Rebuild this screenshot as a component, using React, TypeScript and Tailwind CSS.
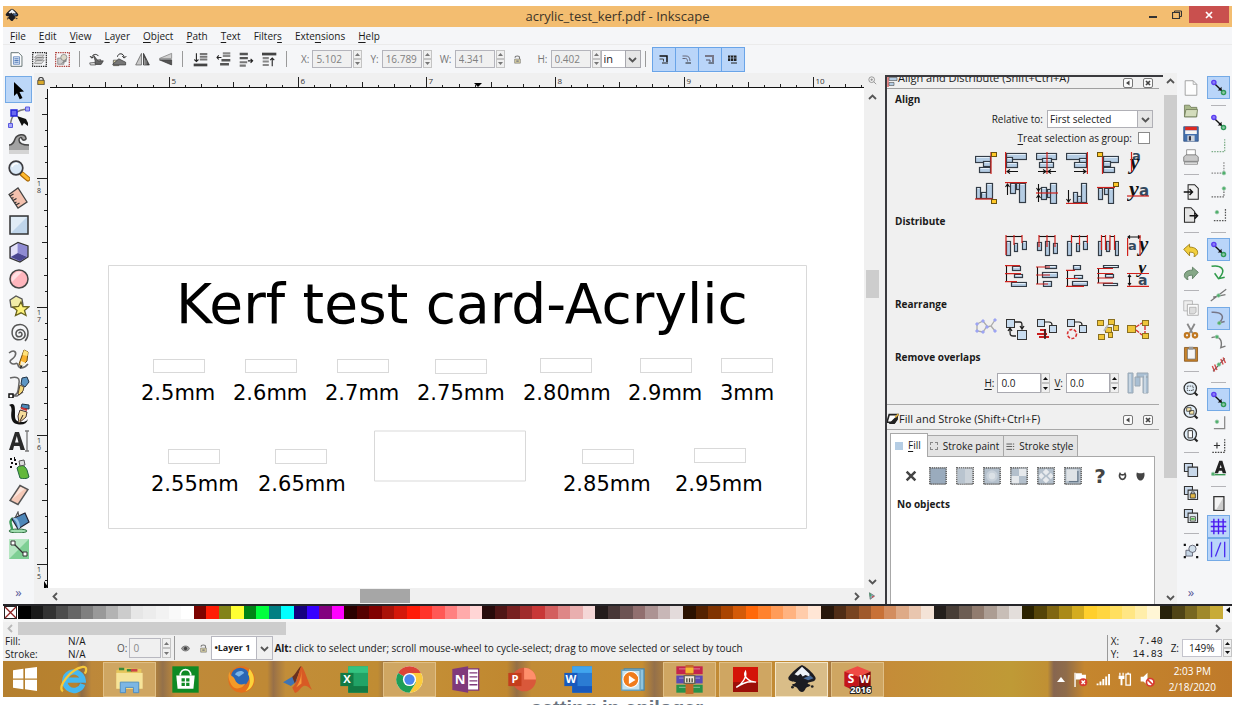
import React from "react";

type Kids = { children?: React.ReactNode };

function Ico({ s = 22, children }: { s?: number } & Kids) {
  return (
    <svg width={s} height={s} viewBox="0 0 22 22" fill="none" aria-hidden="true" className="block shrink-0">
      {children}
    </svg>
  );
}

/* ---------- shared widgets ---------- */

function Arrows({ dark = false, tall = false }: { dark?: boolean; tall?: boolean }) {
  const c = dark ? "#111" : "#777";
  return (
    <span className={tall ? "flex h-5 w-[9px] flex-col" : "flex h-[18px] w-[9px] flex-col"}>
      {["up", "down"].map((d) => (
        <button key={d} type="button" aria-label={d} className="flex flex-1 items-center justify-center border border-[#c4c4c4] bg-[#f0f0f0]">
          <svg width="5" height="3" viewBox="0 0 5 3" aria-hidden="true">
            <path d={d === "up" ? "M0 3L2.5 0 5 3z" : "M0 0L2.5 3 5 0z"} fill={c} />
          </svg>
        </button>
      ))}
    </span>
  );
}

function Num({ label, value }: { label: string; value: string }) {
  return (
    <span className="flex items-center gap-px">
      <label className="flex items-center gap-[3px] text-[#777]">
        {label}
        <input defaultValue={value} className="h-[18px] w-10 border border-[#b4b4bb] bg-[#f0f0f0] px-[3px] text-[#808080] outline-none" />
      </label>
      <Arrows />
    </span>
  );
}

function Chev({ dir, pale = false }: { dir: "up" | "down" | "left" | "right"; pale?: boolean }) {
  const d = { up: "M1 6l3.500-3.500L8 6", down: "M1 3l3.500 3.500L8 3", left: "M6 1L2.500 4.500 6 8", right: "M3 1l3.500 3.500L3 8" }[dir];
  return (
    <svg width="9" height="9" viewBox="0 0 9 9" fill="none" aria-hidden="true" className="block shrink-0">
      <path d={d} stroke={pale ? "#b8b8b8" : "#555"} strokeWidth="1.8" />
    </svg>
  );
}

function U({ t }: { t: string }) {
  const [a, b, c] = t.split("_");
  return (
    <span>
      {a}
      <span className="underline decoration-1 underline-offset-2 [text-decoration-skip-ink:none]">{b}</span>
      {c}
    </span>
  );
}

/* ---------- top ---------- */

const menus = ["_F_ile", "_E_dit", "_V_iew", "_L_ayer", "_O_bject", "_P_ath", "_T_ext", "Filter_s_", "Exte_n_sions", "_H_elp"];

function InkMark({ s }: { s: number }) {
  return (
    <Ico s={s}>
      <path d="M11 1C9 1 1 8.500 1 10.500S4 13 6 13.200c1.500.2 0 1.300-1.500 1.500s-.5 1.600 1.500 2c2 .3 2.500 3.800 5 3.800s2-3 4-3.600c1.800-.5 3-1.300 1.500-1.800s-2-1.400 0-1.700 4.500-.7 4.500-2.900S13 1 11 1z" fill="#1c1c22" />
      <path d="M11 2L5.500 7.500 8 8.600l2-1.500 1.500 2 2-1 3 1 0-2z" fill="#eef2f8" />
      <path d="M12 10.500l5-2 2.500 2-4 1.500z" fill="#4a6c9a" />
      <circle cx="4" cy="17" r="1" fill="#222" />
      <circle cx="18.500" cy="16.500" r="1" fill="#222" />
    </Ico>
  );
}

const topIcons: [string, React.ReactNode][] = [
  ["Select all", <><path d="M3 1h11l5 5v15H3z" fill="#fff" stroke="#566" strokeWidth="1.300" /><path d="M6.500 7h9v11h-9z" fill="#dce8f8" stroke="#4470b0" /><path d="M8 10h6M8 12.500h6M8 15h6" stroke="#3462a8" strokeWidth="1.200" /></>],
  ["Select layers", <><path d="M1 1h20v20H1z" stroke="#222" strokeWidth="1.700" strokeDasharray="2 1.300" /><path d="M4 15l4-3h10l-4 5H4zM4 11l4-3h10l-4 4H4zM4 7.500l4-3h10l-4 4H4z" fill="#d8d8d8" stroke="#666" strokeWidth=".8" /></>],
  ["Deselect", <><path d="M1 1h20v20H1z" stroke="#b0403a" strokeWidth="1.700" strokeDasharray="2 1.300" /><path d="M4 9h9v9H4z" fill="#cdcdcd" stroke="#777" /><circle cx="13" cy="8" r="4.500" fill="#dcd8c8" stroke="#777" /><path d="M8 18l9-9v5z" fill="#888" /></>],
];
const rotIcons: [string, React.ReactNode][] = [
  ["Rotate left", <><path d="M1 16l10-1-1 4H2zM11 12l6-1v7h-6z" fill="#ddd" stroke="#444" /><path d="M9 13L7 5l6 8h8l-3 5H9z" fill="#666" stroke="#333" /><path d="M4 8c1-5 7-6 10-2M1.500 6l2.500 3 3-2" stroke="#222" strokeWidth="1.400" /></>],
  ["Rotate right", <><path d="M2 12h8v8H2z" fill="#d8d2a8" stroke="#444" /><path d="M1 18l9-8 10 5v4H2z" fill="#777" stroke="#333" /><path d="M8 7c1-6 9-6 10 1M15 6l3 3 3-3" stroke="#222" strokeWidth="1.400" /></>],
  ["Flip horizontal", <><path d="M9.500 2v17H1z" fill="#c9c9c9" stroke="#555" /><path d="M12.500 2v17H21z" fill="#555" stroke="#222" /><path d="M14 9v10M16 12v7" stroke="#bbb" /></>],
  ["Flip vertical", <><path d="M20 2v7.500H2z" fill="#d0d0d0" stroke="#777" /><path d="M20 19v-7.500H2z" fill="#555" stroke="#333" /></>],
];
const zIcons: [string, React.ReactNode][] = [
  ["Lower to bottom", <><path d="M10 3h11M10 7h11M10 11h11" stroke="#777" strokeWidth="3" /><path d="M1 19h20" stroke="#444" strokeWidth="4" /><path d="M5 2v12M2 11l3 3 3-3" stroke="#222" strokeWidth="1.600" /></>],
  ["Lower", <><path d="M10 2h11M10 6h11" stroke="#888" strokeWidth="3" /><path d="M8 12h13M6 18h13" stroke="#555" strokeWidth="3.500" /><path d="M8 8H2M4 5L1.500 8 4 11" stroke="#222" strokeWidth="1.600" /></>],
  ["Raise", <><path d="M1 3h12M1 9h12" stroke="#555" strokeWidth="3.500" /><path d="M1 15h11M1 20h9" stroke="#777" strokeWidth="3" /><path d="M13 13h7M17 10l3 3-3 3" stroke="#222" strokeWidth="1.600" /></>],
  ["Raise to top", <><path d="M0 3h21" stroke="#444" strokeWidth="4" /><path d="M1 9h9M1 14h9M1 19h9" stroke="#888" strokeWidth="3" /><path d="M15 21V9M12 12l3-3 3 3" stroke="#222" strokeWidth="1.600" /></>],
];

const Sep = () => <span className="h-4 w-px bg-[#9a9a9a]" />;

function IconRow({ items, size = 15 }: { items: [string, React.ReactNode][]; size?: number }) {
  return (
    <div className="flex gap-2">
      {items.map(([n, g]) => (
        <button key={n} type="button" aria-label={n} className="flex">
          <Ico s={size}>{g}</Ico>
        </button>
      ))}
    </div>
  );
}

const scaleArt = [
  <><path d="M3 4h15v12" stroke="#111" strokeWidth="3" /><path d="M3 10h8v5" stroke="#444" strokeWidth="2" /><path d="M8 18h12" stroke="#222" strokeWidth="2" /></>,
  <><path d="M3 4h7c5 0 8 3 8 10" stroke="#667" strokeWidth="2" /><path d="M3 9h6c3 0 4 2 4 6" stroke="#667" strokeWidth="2" /><path d="M9 18h11" stroke="#222" strokeWidth="2" /></>,
  <><path d="M2 4h16v12" stroke="#778" strokeWidth="4" /><path d="M4 12h8v4" stroke="#556" strokeWidth="2" /><path d="M9 18h11" stroke="#222" strokeWidth="2" /></>,
  <><path d="M2 3h17v11H2z" fill="#222" /><path d="M2 8h17M7 3v11M13 3v11" stroke="#b8d4f8" strokeWidth="1.300" /><path d="M8 18h12" stroke="#222" strokeWidth="2" /></>,
];

const Lock = ({ s }: { s: number }) => (
  <Ico s={s}>
    <path d="M5 7c0-6 11-6 11 0v3" stroke="#777" strokeWidth="2.500" />
    <path d="M4 10h14v10H4z" fill="#d8cfa0" stroke="#777" strokeWidth="1.500" />
    <path d="M8 13h6v4H8z" fill="#888" />
  </Ico>
);

function Top() {
  return (
    <>
      <header className="grid h-[21px] shrink-0 grid-cols-[1fr_auto_1fr] bg-[#f3bd70]">
        <span className="pl-[2px] pt-[2px]"><InkMark s={14} /></span>
        <h1 className="text-[13px] leading-[21px] text-[#3c3428]">acrylic_test_kerf.pdf - Inkscape</h1>
        <div className="flex items-start justify-end pr-[3px]">
          <button type="button" aria-label="Minimize" className="flex h-[17px] w-6 items-center justify-center"><span className="mt-[5px] h-[2px] w-2 bg-[#333]" /></button>
          <button type="button" aria-label="Restore" className="flex h-[17px] w-6 items-center justify-center">
            <svg width="10" height="9" viewBox="0 0 10 9" fill="none" aria-hidden="true"><path d="M2.500 2V1h7v5.500H8" stroke="#333" /><path d="M.5 2.500h7v6h-7z" stroke="#333" strokeWidth="1.200" /></svg>
          </button>
          <button type="button" aria-label="Close" className="flex h-[17px] w-10 items-center justify-center bg-[#c9504e]">
            <svg width="8" height="8" viewBox="0 0 8 8" aria-hidden="true"><path d="M1 1l6 6M7 1L1 7" stroke="#fff" strokeWidth="1.700" /></svg>
          </button>
        </div>
      </header>
      <nav className="flex h-[18px] shrink-0 items-center gap-[13px] border-b border-[#ebebeb] bg-[#f5f6f8] pl-[7px] pt-[2px] text-[#1a1a1a]">
        {menus.map((m) => (
          <a key={m} href="#menu"><U t={m} /></a>
        ))}
      </nav>
      <div className="flex h-7 shrink-0 items-center bg-[#f5f6f8] pl-[6px]">
        <IconRow items={topIcons} />
        <span className="w-[9px]" /><Sep /><span className="w-[9px]" />
        <IconRow items={rotIcons} />
        <span className="w-[9px]" /><Sep /><span className="w-[10px]" />
        <IconRow items={zIcons} />
        <span className="w-[9px]" /><Sep /><span className="w-[14px]" />
        <div className="flex items-center gap-2">
          <Num label="X:" value="5.102" />
          <Num label="Y:" value="16.789" />
          <Num label="W:" value="4.341" />
          <button type="button" aria-label="Lock ratio" className="mr-2 flex"><Lock s={9} /></button>
          <Num label="H:" value="0.402" />
        </div>
        <span className="flex">
          <select aria-label="Unit" className="h-[18px] w-6 appearance-none border border-r-0 border-[#b4b4bb] bg-white px-[2px] text-[11px] leading-[14px] text-[#222] outline-none"><option>in</option></select>
          <span className="flex h-[18px] w-4 items-center justify-center border border-[#a8a8ae] bg-[#e6e6e6]"><Chev dir="down" /></span>
        </span>
        <span className="w-1" /><Sep /><span className="w-[6px]" />
        <div className="flex">
          {scaleArt.map((g, i) => (
            <button key={i} type="button" aria-label={"Scale option " + (i + 1)} className="-mr-px flex h-[25px] w-6 items-center justify-center border border-[#69a4e8] bg-[#b9d5f9]">
              <Ico s={11}>{g}</Ico>
            </button>
          ))}
        </div>
      </div>
    </>
  );
}

/* ---------- toolbox ---------- */

const tools: [string, React.ReactNode][] = [
  ["Selector", <path d="M6 3l10 9.500-4.500.5 3 6-2.800 1.200-2.700-6L6 17z" fill="#000" />],
  ["Nodes", <><path d="M2.500 19C3 10 8 3.500 20 3" stroke="#777" strokeWidth="1.500" /><path d="M9 10l5 10 2-3 4 3 0-3-2-4z" fill="#111" /><path d="M3 4h6v6H3z" fill="#6a6af0" stroke="#2222d8" strokeWidth="1.400" /><path d="M17.500 1h4v4h-4zM.5 17.500h4v4h-4z" fill="#a8a8fa" stroke="#5a5ae0" /></>],
  ["Tweak", <><path d="M1 12c4 0 5-3 6-6 2-5 10-6 11-1 .5 2-3 3-4 1 0-2-3-2-3 1 0 4 4 5 10 5v9H1z" fill="#a2a2a2" /><path d="M1 12c4 0 5-3 6-6 2-5 10-6 11-1 .5 2-3 3-4 1 0-2-3-2-3 1 0 4 4 5 10 5" stroke="#444" strokeWidth="1.500" /><path d="M1 17h20v4H1z" fill="#d4d4d4" /></>],
  ["Zoom", <><path d="M14 14l6 5" stroke="#a86808" strokeWidth="5" strokeLinecap="round" /><path d="M14.500 14l5.500 4.800" stroke="#ffb92e" strokeWidth="3" strokeLinecap="round" /><circle cx="8" cy="8" r="6.800" fill="#d9e8f6" stroke="#3c3c40" strokeWidth="1.700" /><path d="M4 7c1-3 4-4 6-3" stroke="#fff" strokeWidth="1.500" /></>],
  ["Measure", <><path d="M1 7.500L10 1l9 14-9 6z" fill="#f3c1ae" stroke="#444" strokeWidth="1.300" /><path d="M2 9l3.500-2M3.500 11.500l2-1M5 13.500l3.500-2M6.500 16l2-1M8 18l3.500-2" stroke="#333" strokeWidth="1.200" /></>],
  ["Rectangle", <><path d="M2 2h18v18H2z" fill="#bfd5ea" stroke="#333" strokeWidth="1.500" /><path d="M3 3h16L3 19z" fill="#e0ecf6" /></>],
  ["3D box", <><path d="M2 6l8-4.500L20 5v11l-8 5L2 17z" fill="#9c98d8" stroke="#333" strokeWidth="1.300" /><path d="M3 16l7-4 9 4-7 4z" fill="#4a4690" /><path d="M10 2.500V12l9 3.500V5.500z" fill="#8f8bd2" /><path d="M3 6.500l6.500-4V12L3 15.500z" fill="#e2e0f8" /></>],
  ["Ellipse", <><circle cx="11" cy="11" r="9" fill="#ffb6bd" stroke="#444" strokeWidth="1.500" /><path d="M4 14A8 8 0 0114 4z" fill="#ffdfe2" /></>],
  ["Star", <><path d="M2 5l6-4 6 3 1 6-5 4-7-2z" fill="#f2eda8" stroke="#555" strokeWidth="1.300" /><path d="M13 7l2 4.500 6 .3-4.500 3.700 1.500 5-5-2.700-5.500 2.700 1.500-5L5 12l5.500-.5z" fill="#fdf27a" stroke="#6a6420" strokeWidth="1.300" /></>],
  ["Spiral", <path d="M11 11.500c0-2 3-1.500 3 .8 0 3-5.500 3.500-6 0C7.500 7.500 14 5.500 16.500 10c2.500 5.500-4 9.500-9 7C2.500 14 3 5 9 3c6-2 11 2 11 8 0 3-1 6-3 8" stroke="#555" strokeWidth="1.500" />],
  ["Pencil", <><path d="M1 4c5-4 8-1 6 3s-7 4-4 7 6-2 7 2 6 4 10-1" stroke="#666" strokeWidth="1.600" /><path d="M16 1l4 2-1 9-6 6-2-3z" fill="#f8b12c" stroke="#6a4a10" /><path d="M16 1l4 2-.5 4-5-1z" fill="#ffe27a" /><path d="M13 12l5 2-6 5z" fill="#f8f0d0" /><path d="M12.500 16l2 1-2.500 3z" fill="#111" /></>],
  ["Pen", <><path d="M2 2c7-2 10 0 9 5-1 7 0 12-7 13h5l6-4" stroke="#666" strokeWidth="1.500" /><path d="M1 18h4v4H1z" fill="#fff" stroke="#111" strokeWidth="1.500" /><path d="M14 2l5-1 2 5-4 5-4-3z" fill="#5d96c4" stroke="#234" /><path d="M12 9l4 2-1 4-4 4-1-1z" fill="#f4d878" stroke="#543" /></>],
  ["Calligraphy", <><path d="M1 2c6-3 6 2 6 7S6 19 14 19c4 0 5-2 6-3-1 4-4 6-9 5.500C2 21 3 12 3.500 8 3.800 5 3 3 1 2z" fill="#111" /><path d="M14 1l7 1v4l-8-1z" fill="#4d88b8" stroke="#234" /><path d="M13 5l6 2" stroke="#c33" strokeWidth="2" /><path d="M12 7l7 2-1 5-7 6-1-7z" fill="#f6dc9a" stroke="#433" /><path d="M12 18l3-6" stroke="#322" /></>],
  ["Spray", <><path d="M9 11c3-4 8-3 10 2l2 7c-2 2-6 2-9 1z" fill="#62b83c" stroke="#264" /><path d="M11 4l5-1 1 5-5 1z" fill="#ddd" stroke="#555" /><path d="M2 2h2M6 3h2M3 6h2M7 7h2M2 10h2M6 1h1" stroke="#111" strokeWidth="1.800" /></>],
  ["Eraser", <><path d="M12 1.500l8 4L10 20.500l-8-4z" fill="#f5c8b6" stroke="#555" strokeWidth="1.400" /><path d="M4 15.500L12.500 3l4 2z" fill="#fbe4da" /></>],
  ["Bucket", <><ellipse cx="10" cy="20" rx="9" ry="2" fill="#9fdcae" stroke="#2c6a3c" /><path d="M5 7C0 11 4 13 4 19" stroke="#3c9c58" strokeWidth="2.500" /><path d="M4 8l13-6 4 9-11 7z" fill="#4d86b8" stroke="#223" strokeWidth="1.200" /><path d="M4 8c3-1 6 5 6 10l2-1C12 11 9 6 6 7z" fill="#9cc4e4" /><path d="M7 7l3-6 1 5" stroke="#555" strokeWidth="1.200" /></>],
];

const Text0 = <><path d="M1 20L7 2h4l6 18h-4.500l-1-4H6l-1 4zM7 12.500h3.500L8.800 6z" fill="#2a2a2a" fillRule="evenodd" /><path d="M17 1h4M17 21h4M19 1v20" stroke="#777" strokeWidth="1.300" /></>;
const Conn = <><path d="M1 1h20v20H1z" fill="#7fcf94" /><path d="M1 1h20L1 21z" fill="#b5e6c1" /><path d="M6 6l9 9" stroke="#333" strokeWidth="1.300" /><path d="M3 3h4v4H3zM15 14h4v4h-4z" fill="#fff" stroke="#333" /></>;
const allTools: [string, React.ReactNode][] = [...tools.slice(0, 13), ["Text", Text0], ...tools.slice(13), ["Connector", Conn]];

function Toolbox() {
  return (
    <aside className="flex w-[31px] shrink-0 flex-col items-center bg-[#f5f6f8] pt-[3px]">
      {allTools.map(([n, g], i) => (
        <button key={n} type="button" aria-label={n} className={i === 0 ? "flex h-[27px] w-[27px] items-center justify-center border border-[#74aae6] bg-[#bcd7f8]" : "flex h-[27px] w-[27px] items-center justify-center"}>
          <Ico>{g}</Ico>
        </button>
      ))}
      <a href="#more" aria-label="More tools" className="mt-auto pb-1 text-[13px] leading-4 text-[#5a5a9a]">»</a>
    </aside>
  );
}

/* ---------- canvas ---------- */

const inch = 128.7;

function HRuler() {
  const ticks = Array.from({ length: 130 }, (_, i) => i - 7);
  return (
    <svg className="block h-full w-full" aria-hidden="true">
      {ticks.map((i) => {
        const x = Math.round(121 + (i * inch) / 8) + 0.5;
        const major = i % 8 === 0;
        const top = major ? 4 : i % 4 === 0 ? 9 : i % 2 === 0 ? 11 : 12;
        return (
          <g key={i}>
            <path d={`M${x} ${top}V14`} stroke="#222" />
            {major && <text x={x + 2} y="11" fontSize="8" fill="#333">{5 + i / 8}</text>}
          </g>
        );
      })}
      <path d="M2 14.500H4000" stroke="#111" />
      <path d="M426 10h8l-4 4z" fill="#000" />
    </svg>
  );
}

function VRuler() {
  const ticks = Array.from({ length: 70 }, (_, i) => i - 5);
  return (
    <svg className="block h-full w-full" aria-hidden="true">
      {ticks.map((i) => {
        const y = Math.round(90 + (i * inch) / 8) + 0.5;
        const major = i % 8 === 0;
        const left = major ? 3 : i % 4 === 0 ? 8 : i % 2 === 0 ? 10 : 11;
        const n = String(18 - i / 8);
        return (
          <g key={i}>
            <path d={`M${left} ${y}H13`} stroke="#222" />
            {major && n.length === 2 && (
              <g fontSize="7" fill="#333">
                <text x="3" y={y + 7}>{n[0]}</text>
                <text x="3" y={y + 14}>{n[1]}</text>
              </g>
            )}
          </g>
        );
      })}
      <path d="M13.500 1V4000" stroke="#111" />
      <path d="M10 493v8l4-2z" fill="#000" />
    </svg>
  );
}

/* x, y, width of the cut-out, then the text and its left edge and baseline */
const cuts: [number, number, number, string, number, number][] = [
  [105, 271, 51, "2.5mm", 93, 312], [197, 271, 51, "2.6mm", 185, 312], [289, 271, 51, "2.7mm", 277, 312],
  [387, 271, 51, "2.75mm", 369, 312], [492, 270, 51, "2.80mm", 475, 312], [592, 270, 51, "2.9mm", 580, 312],
  [673, 270, 51, "3mm", 672, 312], [120, 361, 51, "2.55mm", 103, 403], [227, 361, 51, "2.65mm", 210, 403],
  [534, 361, 51, "2.85mm", 515, 403], [646, 360, 51, "2.95mm", 627, 403],
];

function Canvas() {
  return (
    <main className="grid min-w-0 flex-1 grid-cols-[14px_1fr_16px] grid-rows-[15px_1fr_16px] bg-[#f0f0f0]">
      <span className="pl-[3px] pt-1"><Ico s={8}><path d="M5 10V6c0-6 12-6 12 0v4" stroke="#333" strokeWidth="3" /><path d="M2 9h18v12H2z" fill="#d8a828" stroke="#333" strokeWidth="2" /></Ico></span>
      <HRuler />
      <span className="flex items-center justify-center"><Ico s={9}><circle cx="9" cy="9" r="7" stroke="#888" strokeWidth="2" /><path d="M6 9h6M9 6v6M14 14l6 6" stroke="#888" strokeWidth="2" /></Ico></span>

      <VRuler />
      <svg className="block h-full w-full bg-white font-['DejaVu_Sans',sans-serif]" role="img" aria-label="Kerf test card drawing">
        <g stroke="#d9d9d9" fill="none">
          <path d="M60.500 177.500H758.500V440.500H60.500z" />
          <path d="M326.500 343h151v50h-151z" />
          {cuts.map(([x, y, w], i) => <rect key={i} x={x + 0.5} y={y + 0.5} width={w} height={i < 3 ? 13 : 14} />)}
        </g>
        <text x="128" y="235" fontSize="55">Kerf test card-Acrylic</text>
        <g fontSize="21">
          {cuts.map(([, , , t, x, y]) => <text key={t} x={x} y={y}>{t}</text>)}
        </g>
      </svg>
      <div className="flex flex-col items-center pt-[5px] pb-[2px]">
        <Chev dir="up" />
        <span className="basis-[34%]" />
        <span className="h-7 w-[13px] bg-[#cdcdcd]" />
        <span className="flex-1" />
        <Chev dir="down" />
      </div>

      <span />
      <div className="flex items-center px-[3px]">
        <Chev dir="left" />
        <span className="basis-[37%]" />
        <span className="h-[14px] w-[50px] bg-[#a6a6a6]" />
        <span className="flex-1" />
        <Chev dir="right" />
      </div>
      <span className="flex items-center justify-center"><Ico s={8}><path d="M4 2l14 9-12 9z" fill="#9ab" stroke="#566" strokeWidth="2" /><path d="M4 2l6 7-5 4z" fill="#4a6" /><path d="M11 11h7l-6 6z" fill="#c55" /></Ico></span>
    </main>
  );
}

/* ---------- dock ---------- */

type Art = { n: string; b?: number[][]; r?: string; k?: string; y?: number[]; t?: [string, number, number, number, boolean][] };

function AlignIcon({ a }: { a: Art }) {
  return (
    <button type="button" aria-label={a.n} className="flex">
      <Ico>
        {a.b?.map(([x, y, w, h], i) => (
          <g key={i}>
            <rect x={x + 0.5} y={y + 0.5} width={w} height={h} fill="#b5cde4" stroke="#333c46" strokeWidth="1.200" />
            <path d={`M${x + 1.5} ${y + 1.5}h${w - 2}`} stroke="#e4eef7" />
          </g>
        ))}
        {a.t?.map(([s, x, y, f, serif], i) => (
          <text key={i} x={x} y={y} fontSize={f} fontWeight="bold" fontStyle={serif ? "italic" : "normal"} fill={serif ? "#111" : "#34495e"} className={serif ? "font-['Liberation_Serif',serif]" : "font-['DejaVu_Sans',sans-serif]"}>{s}</text>
        ))}
        {a.k && <path d={a.k} stroke="#111" strokeWidth="1.100" />}
        {a.r && <path d={a.r} stroke="#d0211c" strokeWidth="1.200" />}
        {a.y && <rect x={a.y[0] + 0.5} y={a.y[1] + 0.5} width="5" height="4" fill="#ffc828" stroke="#6b5310" />}
      </Ico>
    </button>
  );
}

const rowA: Art[] = [
  { n: "Right edges to left anchor", b: [[0, 4, 15, 6], [8, 9, 7, 5], [4, 15, 11, 5]], r: "M16 0V22", y: [16, 0] },
  { n: "Left edges", b: [[1, 1, 20, 6], [1, 5, 6, 5], [1, 10, 11, 5]], r: "M.6 0V22", k: "M2 19.500H13M5 17.500l-3 2 3 2" },
  { n: "Centre vertical axis", b: [[0, 1, 20, 6], [6, 6, 9, 5], [3, 10, 14, 5]], r: "M11 0V22", k: "M2 19.500H20M7 17.500l3 2-3 2M15 17.500l-3 2 3 2" },
  { n: "Right edges", b: [[0, 1, 20, 6], [13, 6, 7, 5], [8, 10, 12, 5]], r: "M21.400 0V22", k: "M8 19.500H20M17 17.500l3 2-3 2" },
  { n: "Left edges to right anchor", b: [[6, 4, 15, 6], [6, 9, 7, 5], [6, 15, 11, 5]], r: "M5.500 0V22", y: [0, 0] },
  { n: "Baseline anchors vertically", t: [["a", 5, 8, 13, false], ["y", 3, 17, 21, true]], r: "M4.500 0V20" },
];
const rowB: Art[] = [
  { n: "Bottom edges to top anchor", b: [[1, 5, 4, 11], [6, 10, 5, 6], [11, 1, 6, 15]], r: "M0 17H18", y: [16, 17] },
  { n: "Top edges", b: [[5, 1, 5, 10], [11, 1, 5, 6], [14, 1, 6, 19]], r: "M0 .6H22", k: "M2.500 2V13M.5 5l2-3 2 3" },
  { n: "Centre horizontal axis", b: [[5, 5, 5, 12], [11, 7, 5, 8], [14, 1, 6, 20]], r: "M0 11H22", k: "M2.500 2V20M.5 6l2 3 2-3M.5 16l2-3 2 3" },
  { n: "Bottom edges", b: [[7, 10, 4, 10], [11, 14, 4, 6], [15, 1, 5, 19]], r: "M0 21.400H22", k: "M2.500 8V20M.5 17l2 3 2-3" },
  { n: "Top edges to bottom anchor", b: [[1, 6, 4, 11], [7, 6, 4, 6], [11, 6, 5, 15]], r: "M0 5.500H18", y: [16, 0] },
  { n: "Baseline anchors horizontally", t: [["y", 2, 14, 22, true], ["a", 12, 14, 15, false]], r: "M0 14H22" },
];
const rowC: Art[] = [
  { n: "Distribute left edges", b: [[1, 6, 4, 14], [9, 8, 3, 8], [17, 6, 4, 8]], r: "M1 0V20M9 0V10M17 0V8", k: "M1 1.500H17" },
  { n: "Distribute centres", b: [[1, 7, 4, 8], [9, 6, 4, 14], [17, 8, 4, 10]], r: "M3 0V12M11 0V12M19 0V12", k: "M3 1.500H19" },
  { n: "Distribute right edges", b: [[1, 6, 4, 14], [10, 8, 3, 8], [17, 6, 4, 8]], r: "M5.500 0V8M13.500 0V10M21.400 0V8", k: "M6 1.500H21" },
  { n: "Distribute gaps", b: [[1, 6, 3, 14], [9, 6, 3, 10], [18, 6, 3, 14]], r: "M4.500 0V15M8.500 0V15M13 0V15M17.500 0V15", k: "M4 1.500H8M13 1.500H17" },
  { n: "Distribute baselines", t: [["a", 1, 15, 13, false], ["y", 12, 16, 21, true]], r: "M.6 3V21M13 0V21", k: "M1 2H13M3 .5L1 2l2 1.500M11 .5L13 2l-2 1.500" },
];
const rowD: Art[] = [
  { n: "Distribute tops", b: [[7, 1, 8, 4], [9, 9, 8, 3], [6, 17, 15, 4]], r: "M0 .6H15M0 8.600H16M0 16.600H12", k: "M1.500 1V17" },
  { n: "Distribute middles", b: [[9, 0, 11, 3], [6, 7, 15, 5], [7, 16, 8, 5]], r: "M0 2H14M0 10H14M0 19H12", k: "M1.500 2V19" },
  { n: "Distribute bottoms", b: [[7, 0, 7, 4], [8, 10, 8, 3], [6, 16, 15, 4]], r: "M0 5.400H9M0 13.500H12M0 21.400H18", k: "M1.500 5V21" },
  { n: "Distribute vertical gaps", b: [[6, 0, 15, 2], [8, 9, 8, 3], [6, 18, 14, 2]], r: "M0 3.500H16M0 8.500H16M0 13H16M0 18H16", k: "M1.500 3V18" },
  { n: "Distribute baselines vertically", t: [["y", 11, 8, 19, true], ["a", 11, 20, 14, false]], r: "M0 8.500H22M0 21.400H22", k: "M2.500 10V20M1 12l1.500-2L4 12M1 18l1.500 2L4 18" },
];

const sq = (x: number, y: number, s = 8) => <rect x={x + 0.5} y={y + 0.5} width={s} height={s} fill="#c8dcef" stroke="#333" />;
const ysq = (x: number, y: number, w = 6, h = 5) => <rect x={x + 0.5} y={y + 0.5} width={w} height={h} fill="#efc53a" stroke="#8a7020" />;
const rowE: [string, React.ReactNode][] = [
  ["Graph layout", <><path d="M2 6l6-3 4 5-4 6-6-1zM12 9l4-1 4-6M16 8l4 5" stroke="#aaa" strokeWidth="1.300" /><path d="M1 5h2v2H1zM7 2h2v2H7zM11 8h2v2h-2zM7 13h2v2H7zM1 12h2v2H1zM19 1h2v2h-2zM19 12h2v2h-2z" fill="#aab0ff" stroke="#98a0f0" /></>],
  ["Exchange", <>{sq(1, 1)}{sq(12, 12, 9)}<path d="M10 4h5c2 0 2 1 2 6M15 8l2 3 2-3M11 18H8c-3 0-3-1-3-7M3 13l2-3 2 3" stroke="#222" strokeWidth="1.300" /></>],
  ["Exchange by z-order", <>{sq(1, 1, 7)}{sq(13, 7, 7)}<path d="M8 4h5c2 0 3 1 3 3" stroke="#222" strokeWidth="1.200" /><path d="M4 12h5v6M1 16h10M3 19h10" stroke="#c81e1e" strokeWidth="2.200" /><path d="M9 11v10" stroke="#222" strokeWidth="1.500" /></>],
  ["Exchange clockwise", <>{sq(1, 1, 7)}{sq(13, 7, 7)}<path d="M8 4h5c2 0 3 1 3 3" stroke="#222" strokeWidth="1.200" /><circle cx="6" cy="16" r="4.500" stroke="#d83030" strokeWidth="1.600" strokeDasharray="3 1.500" /></>],
  ["Randomize", <>{ysq(0, 2)}{ysq(11, 1)}{ysq(8, 9)}{ysq(16, 7, 5)}{ysq(1, 16)}{ysq(11, 14, 4)}<path d="M7 13l4-6" stroke="#bbb" strokeWidth="2" /></>],
  ["Unclump", <><path d="M9 9l6-4M9 12l6 5M18 8v7" stroke="#d83030" strokeWidth="1.400" strokeDasharray="4 1" />{ysq(0, 7, 8, 7)}{ysq(15, 2, 6, 5)}{ysq(15, 15, 6, 5)}</>],
];

function ArtRow({ items }: { items: Art[] }) {
  return (
    <div className={items.length === 6 ? "flex w-[174px] justify-between" : "flex w-[144px] justify-between"}>
      {items.map((a) => <AlignIcon key={a.n} a={a} />)}
    </div>
  );
}

function HeadButtons() {
  return (
    <span className="ml-auto flex gap-[10px] pr-[6px] pt-px">
      {["Iconify", "Close"].map((n, i) => (
        <button key={n} type="button" aria-label={n} className="flex">
          <svg width="10" height="10" viewBox="0 0 10 10" fill="none" aria-hidden="true">
            <rect x=".5" y=".5" width="9" height="9" rx="1.500" fill="#fafafa" stroke="#777" />
            {i === 0 ? <path d="M6.500 2.500v5L3 5z" fill="#444" /> : <path d="M3 3l4 4M7 3L3 7" stroke="#444" strokeWidth="1.700" />}
          </svg>
        </button>
      ))}
    </span>
  );
}

const H2 = ({ children }: Kids) => <h3 className="mt-[7px] h-5 pl-2 font-bold leading-5">{children}</h3>;

function OverlapField({ t }: { t: string }) {
  return (
    <span className="flex items-center">
      <label className="flex items-center gap-[3px]"><U t={t} />
        <input defaultValue="0.0" className="h-5 w-11 border border-[#a9a9b0] bg-white px-[3px] outline-none" />
      </label>
      <Arrows dark tall />
    </span>
  );
}

const paints = ["flat", "linear", "radial", "mesh", "pattern", "swatch"];
function Paint({ k }: { k: string }) {
  return (
    <Ico s={18}>
      <rect x="1" y="1" width="20" height="20" fill={k === "flat" ? "#9aabbd" : k === "linear" ? "#ccd3da" : "#b4c0cc"} stroke="#666" strokeWidth="2" strokeDasharray="1.400 1" />
      {k === "linear" && <path d="M2 2h9v18H2z" fill="#b9c4cf" />}
      {k === "radial" && <><circle cx="11" cy="11" r="7" fill="#c8d1da" /><circle cx="11" cy="11" r="4" fill="#dbe1e6" /></>}
      {k === "mesh" && <path d="M11 2h9v9h-9zM2 11h9v9H2z" fill="#e6e9ec" />}
      {k === "pattern" && <path d="M11 2l4 4-4 4-4-4zM11 12l4 4-4 4-4-4zM5 7l4 4-4 4-3-4zM17 7l3 4-3 4-4-4z" fill="#e8ebee" />}
      {k === "swatch" && <><path d="M3 3h13v14H3z" fill="#dfe3e6" /><path d="M17 5v13H6" stroke="#667788" strokeWidth="1.500" /></>}
    </Ico>
  );
}

function Dock() {
  return (
    <section className="flex w-[278px] shrink-0 flex-col bg-[#f0f0f0] pt-[2px] text-[#1a1a1a]">
      <div className="flex min-h-0 flex-1 flex-col border-l-2 border-t-2 border-[#3a3a3e]">
        <div className="mr-1 flex h-3 shrink-0 overflow-hidden border-b border-[#a0a0a0]">
          <Ico s={11}><path d="M2 0V20" stroke="#d22" strokeWidth="2" /><path d="M4 1h16v6H4zM4 11h10v6H4z" fill="#b5cde4" stroke="#333" /></Ico>
          <h2 className="-mt-[7px] h-4 whitespace-nowrap text-[11px] leading-4">Align and Distribute (Shift+Ctrl+A)</h2>
          <HeadButtons />
        </div>
        <h3 className="h-[21px] pl-2 font-bold leading-[21px]">Align</h3>
        <div className="flex flex-col items-end pr-[10px]">
          <label className="flex h-[18px] items-center gap-1">Relative to:
            <span className="flex">
              <select className="h-[18px] w-[90px] appearance-none border border-r-0 border-[#b0b0b6] bg-white px-[2px] outline-none"><option>First selected</option></select>
              <span className="flex h-[18px] w-4 items-center justify-center border border-[#b0b0b6] bg-[#e6e6e6]"><Chev dir="down" /></span>
            </span>
          </label>
          <label className="flex h-5 items-center gap-[6px] pr-[3px]"><U t="_T_reat selection as group:" />
            <input type="checkbox" className="h-3 w-3 appearance-none border border-[#8a8a8a] bg-white" />
          </label>
        </div>
        <div className="flex flex-col items-end gap-2 pr-[14px] pt-1">
          <ArtRow items={rowA} />
          <ArtRow items={rowB} />
        </div>
        <H2>Distribute</H2>
        <div className="flex flex-col items-end gap-2 pr-[14px] pt-1">
          <ArtRow items={rowC} />
          <ArtRow items={rowD} />
        </div>
        <H2>Rearrange</H2>
        <div className="flex justify-end pr-[14px] pt-1">
          <div className="flex w-[174px] justify-between">
            {rowE.map(([n, g]) => <button key={n} type="button" aria-label={n} className="flex"><Ico>{g}</Ico></button>)}
          </div>
        </div>
        <H2>Remove overlaps</H2>
        <div className="mt-[5px] flex h-[22px] items-center justify-end gap-1 pr-[14px]">
          <OverlapField t="_H_:" />
          <OverlapField t="_V_:" />
          <button type="button" aria-label="Remove overlaps" className="ml-1 flex"><Ico><path d="M1 1h5v20H1zM8 5h5v9H8zM10 1h11v4H10zM16 5h5v16h-5z" fill="#a9bfd3" stroke="#9aa8b4" /><path d="M3 2v18M18 3v18" stroke="#c8d6e2" strokeWidth="2" /></Ico></button>
        </div>
        <div className="mr-1 mt-[10px] flex h-[26px] shrink-0 items-center border-b border-t border-[#a8a8a8] pt-1">
          <Ico s={12}><path d="M4 3h16l-6 14H0z" fill="#fff" stroke="#222" strokeWidth="3" /><path d="M11 12l9-9v9l-6 8H3z" fill="#222" /><path d="M15 8l6-6" stroke="#e0b040" strokeWidth="3" /></Ico>
          <h2 className="whitespace-nowrap text-[11px] leading-4">Fill and Stroke (Shift+Ctrl+F)</h2>
          <HeadButtons />
        </div>
        <div className="mx-[3px] mr-2 mt-[3px] flex min-h-0 flex-1 flex-col">
          <div role="tablist" className="flex items-end">
            <button role="tab" type="button" className="z-10 -mb-px flex h-6 items-center gap-[5px] border border-b-0 border-[#a8a8a8] bg-white px-1 pr-[6px]">
              <span className="h-2 w-2 bg-[#b5cde4]" /><U t="_F_ill" />
            </button>
            <button role="tab" type="button" className="flex h-[21px] items-center gap-[5px] border border-b-0 border-l-0 border-[#a8a8a8] bg-[#e3e3e3] px-[2px] pr-1">
              <span className="h-2 w-2 border border-dashed border-[#888]" />Stroke paint
            </button>
            <button role="tab" type="button" className="flex h-[21px] items-center gap-1 border border-b-0 border-l-0 border-[#a8a8a8] bg-[#e3e3e3] px-[2px] pr-1">
              <Ico s={9}><path d="M1 5h20M1 11h20M1 18h20" stroke="#444" strokeWidth="2" strokeDasharray="14 2 3 2" /></Ico>Stroke style
            </button>
          </div>
          <div className="flex-1 border border-b-0 border-[#a8a8a8] bg-white">
            <div className="flex items-center gap-[9px] pl-[11px] pt-[10px]">
              <button type="button" aria-label="No paint" className="mx-[3px] flex"><Ico s={12}><path d="M3 3l16 16M19 3L3 19" stroke="#444" strokeWidth="4.500" /></Ico></button>
              {paints.map((k) => <button key={k} type="button" aria-label={k} className="flex"><Paint k={k} /></button>)}
              <button type="button" aria-label="Unset paint" className="w-[18px] text-center text-[20px] font-bold leading-[18px] text-[#444] font-['DejaVu_Sans',sans-serif]">?</button>
              <button type="button" aria-label="Fill rule even-odd" className="flex"><Ico s={9}><path d="M5 4c-4 8 2 14 6 14s10-6 6-14c-2 3-2 3-6 3S7 7 5 4z" stroke="#444" strokeWidth="4" /></Ico></button>
              <button type="button" aria-label="Fill rule nonzero" className="flex"><Ico s={9}><path d="M2 1l5 2h8l5-2c3 9-2 19-9 20C4 20-1 10 2 1z" fill="#444" /></Ico></button>
            </div>
            <p className="pl-[6px] pt-[11px] font-bold leading-4">No objects</p>
          </div>
        </div>
      </div>
    </section>
  );
}

/* ---------- right columns ---------- */

const nodeLink = <><path d="M6 6l10 10" stroke="#111" strokeWidth="1.800" /><path d="M15 10v5h-5z" fill="#111" /><circle cx="5" cy="4.500" r="2.700" fill="#8a7cf8" stroke="#5a3cf0" strokeWidth="1.800" /><circle cx="17.500" cy="17.500" r="2.700" fill="#8fc9a4" stroke="#2f9a5a" strokeWidth="1.800" /></>;
const gdot = (x: number, y: number) => <circle cx={x} cy={y} r="2.300" fill="#4eb06c" stroke="#9cc8aa" />;
const mag = <><path d="M15 15l5 5" stroke="#222" strokeWidth="3" /><circle cx="10" cy="10" r="8.500" fill="#e2eef8" stroke="#333" strokeWidth="1.800" /></>;
const win2 = <path d="M2 2h11v11H2z" fill="#c8d8ea" stroke="#333" strokeWidth="1.500" />;
const pageFold = <path d="M3 1h11l5 5v15H3z" fill="#fdfdfd" stroke="#999" strokeWidth="1.200" />;

type Cell = string | [string, React.ReactNode, boolean?];

const cmds: Cell[] = [
  ["New", <>{pageFold}<path d="M14 1v5h5" stroke="#999" /></>],
  ["Open", <><path d="M2 3h7l2 3h8v13H2z" fill="#a9b88c" stroke="#66724e" /><path d="M4 9h16l-1.500 10H2z" fill="#d3dcbc" stroke="#66724e" /></>],
  ["Save", <><path d="M1 1h20v20H1z" fill="#4470ae" stroke="#2a4a7c" /><path d="M3 1h16v5H3z" fill="#dd2a22" /><path d="M3 6h16v5H3z" fill="#f4f4f4" /><path d="M6 13h10v8H6z" fill="#ccd4de" /><path d="M8 14h3v6H8z" fill="#334" /></>],
  ["Print", <><path d="M5 1h12v9H5z" fill="#fff" stroke="#777" /><path d="M1 11l3-3h14l3 3v6H1z" fill="#c9c9c9" stroke="#666" /><path d="M2 18h18v3H2z" fill="#eee" stroke="#777" /></>],
  "-",
  ["Import", <><path d="M7 1h9l5 5v15H7z" fill="#f0f0f0" stroke="#222" strokeWidth="1.400" /><path d="M1 11h12M9 7l4 4-4 4" stroke="#111" strokeWidth="2" /></>],
  ["Export", <><path d="M2 1h9l5 5v15H2z" fill="#e4e4e4" stroke="#222" strokeWidth="1.400" /><path d="M9 12h11M16 8l4 4-4 4" stroke="#111" strokeWidth="2" /></>],
  "-",
  ["Undo", <path d="M1 10l8-7v4c8 0 12 4 11 9-1 2-3 4-5 4 2-5-1-6-6-6v5z" fill="#f2cf3e" stroke="#9a7c14" strokeWidth="1.200" />],
  ["Redo", <path d="M21 10l-8-7v4C5 7 1 11 2 16c1 2 3 4 5 4-2-5 1-6 6-6v5z" fill="#86a888" stroke="#5c7c60" strokeWidth="1.200" />],
  "-",
  ["Copy", <><path d="M1 1h12v14H1z" fill="#eee" stroke="#aaa" /><path d="M6 6h15v15H6z" fill="#fafafa" stroke="#999" /><path d="M9 10h9v7l-3 2H9z" fill="#ddd" stroke="#aaa" /></>],
  ["Cut", <><path d="M6 1l7 13M16 1L9 14" stroke="#888" strokeWidth="2.500" /><circle cx="5.500" cy="17" r="3" stroke="#c07820" strokeWidth="3" /><circle cx="16.500" cy="17" r="3" stroke="#c07820" strokeWidth="3" /></>],
  ["Paste", <><path d="M2 2h18v19H2z" fill="#c8832a" stroke="#7c4a10" /><path d="M6 4h11v14H6z" fill="#f6f6f6" stroke="#666" /><path d="M8 1h6v4H8z" fill="#999" /></>],
  "-",
  ["Zoom selection", <>{mag}<path d="M6 7h8v6H6z" stroke="#222" strokeDasharray="2 1" /></>],
  ["Zoom drawing", <>{mag}<path d="M5 5h6v5H5zM9 9h6v5H9z" fill="#f4e3a8" stroke="#333" /></>],
  ["Zoom page", <>{mag}<path d="M7 5h6v10H7z" fill="#fff" stroke="#333" strokeWidth="1.300" /></>],
  "-",
  ["Duplicate", <>{win2}<path d="M7 7h13v13H7z" fill="#c8d8ea" stroke="#333" strokeWidth="1.500" /></>],
  ["Clone", <>{win2}<path d="M7 7h13v13H7z" fill="#dfe7ee" stroke="#333" strokeWidth="1.500" /><path d="M10 12h7v6h-7z" fill="#e2b848" stroke="#222" /><path d="M11.500 12V9.500h4V12" stroke="#222" /></>],
  ["Unlink clone", <>{win2}<path d="M7 7h13v13H7z" fill="#dfe7ee" stroke="#333" strokeWidth="1.500" /><path d="M10 12h7v6h-7z" fill="#e8f4e0" stroke="#222" /><path d="M11 15h5" stroke="#3a3" strokeWidth="2" /></>],
  "-",
  ["Group", <><path d="M1 1h3v3H1zM18 1h3v3h-3zM1 18h3v3H1zM18 18h3v3h-3z" fill="#111" /><path d="M4 10h9v8H4z" fill="#c6d6e6" stroke="#445" /><circle cx="13" cy="8" r="5" fill="#d0deea" stroke="#445" /></>],
];

const dash = "2 1.500";
const snaps: Cell[] = [
  ["Enable snapping", nodeLink, true],
  "-",
  ["Snap bounding boxes", nodeLink],
  ["Bounding box edges", <path d="M2 19h17V3" stroke="#7fae8a" strokeWidth="1.600" strokeDasharray={dash} />],
  ["Bounding box corners", <><path d="M2 17h16V3" stroke="#888" strokeWidth="1.600" strokeDasharray={dash} />{gdot(18, 17)}</>],
  ["Edge midpoints", <><path d="M2 18h16V8" stroke="#666" strokeWidth="1.600" strokeDasharray={dash} />{gdot(18, 7)}</>],
  ["Box centres", <><path d="M5 19h15V3" stroke="#555" strokeWidth="1.600" strokeDasharray={dash} />{gdot(9, 8)}</>],
  "-",
  ["Snap nodes", nodeLink, true],
  ["Snap to paths", <path d="M2 3c12-2 20 4 10 15M6 12l5 7 8-2" stroke="#2f9a4a" strokeWidth="2" />],
  ["Path intersections", <><path d="M1 18L21 3M4 13l16-3" stroke="#777" strokeWidth="1.600" />{gdot(11, 11)}</>],
  ["Cusp nodes", <><path d="M2 3c12-1 19 5 10 13M10 17l9-2" stroke="#778" strokeWidth="2" />{gdot(12, 17)}</>, true],
  ["Smooth nodes", <><path d="M2 6c12-4 14 6 12 13l6-2" stroke="#777" strokeWidth="1.800" />{gdot(9, 5)}</>],
  ["Line midpoints", <><path d="M4 20L19 3" stroke="#555" strokeWidth="1.500" /><path d="M3 13l3 7M6 11l3 7M14 4l3 7M17 2l3 7" stroke="#d04a4a" strokeWidth="1.800" />{gdot(11.5, 11)}</>],
  "-",
  ["Snap others", nodeLink, true],
  ["Object centres", <><path d="M5 19h14V3" stroke="#888" strokeWidth="1.600" />{gdot(9, 10)}</>],
  ["Rotation centres", <><path d="M3 20h16V3" stroke="#444" strokeWidth="1.600" strokeDasharray={dash} /><path d="M9 7v8M5 11h8" stroke="#333" strokeWidth="1.500" /></>],
  ["Text baselines", <><path d="M6 17L12 1h4l5 16h-4.500l-1-3h-4l-1 3zM12.500 10.500h2.500L14 6z" fill="#222" fillRule="evenodd" /><path d="M2 19h18" stroke="#3a9a52" strokeWidth="1.800" />{gdot(4, 18)}</>],
  "-",
  ["Page border", <><path d="M5 2h13v18H5z" fill="#f4f4f4" stroke="#333" strokeWidth="1.700" /><path d="M17 4v15H8z" fill="#ccc" /></>],
  ["Grids", <path d="M5 1v20M11 1v20M17 1v20M1 5h20M1 11h20M1 17h20" stroke="#4a18f0" strokeWidth="1.800" />, true],
  ["Guides", <path d="M2 1v20M19 1v20M7 20L14 2" stroke="#4a2cf0" strokeWidth="1.700" />, true],
];

function Column({ items, size, more = false }: { items: Cell[]; size: number; more?: boolean }) {
  return (
    <div className={more ? "flex w-7 flex-col items-center pt-[3px]" : "flex w-[27px] flex-col items-center pt-[3px]"}>
      {items.map((it, i) =>
        typeof it === "string" ? (
          <span key={i} className="flex h-3 shrink-0 items-center"><span className="h-px w-[15px] bg-[#b4b4b8]" /></span>
        ) : (
          <button key={i} type="button" aria-label={it[0]} className={it[2] ? "flex h-[23px] w-[23px] shrink-0 items-center justify-center border border-[#74aae6] bg-[#b9d5f9]" : "flex h-[23px] w-[23px] shrink-0 items-center justify-center"}>
            <Ico s={size}>{it[1]}</Ico>
          </button>
        ),
      )}
      {more && <a href="#more" aria-label="More commands" className="mt-auto pb-1 text-[13px] leading-4 text-[#5a5a9a]">»</a>}
    </div>
  );
}

/* ---------- palette ---------- */

const palette = (
  "000000 1a1a1a 333333 4d4d4d 666666 808080 999999 b3b3b3 cccccc e6e6e6 ececec f2f2f2 f9f9f9 ffffff " +
  "7d0300 ff1c04 838318 ffff33 008416 00ff3d 007f83 00ffff 16007f 3600ff 83007f ff00ff " +
  "2b0000 550000 800000 aa1208 d4180a ff1c08 ff342a ff5855 ff8080 ffaaaa ffd5d5 " +
  "280b0b 501616 782121 a02c2c c83737 d35f5f de8787 e9afaf f4d7d7 241c1c 483737 6c5353 916f6f ac9393 c8b7b7 e3dbdb " +
  "2b1100 552200 803300 aa4400 d45a08 ff680a ff822e ff9c59 ffb380 ffccaa ffe6d5 " +
  "28170b 502d16 784421 a05a2c c87137 d38d5f deaa87 e9c6af f4e3d7 241f1c 483e37 6c5d53 917c6f ac9d93 c8beb7 e3dedb " +
  "2b2200 554408 806612 aa8a18 d4ac20 ffcf2c ffd640 ffdf60 ffe684 ffeeaa fff6d5 28220b 504416 786721 a0892c c8ab37"
).split(" ");

function PaletteBar() {
  return (
    <div className="shrink-0 bg-[#f0f0f0]">
      <div className="flex h-[18px] items-start border-t-2 border-[#26262a] bg-[#f6f6f6]">
        <button type="button" aria-label="No colour" className="flex h-[13px] w-[15px] justify-center bg-white">
          <svg width="13" height="13" viewBox="0 0 13 13" aria-hidden="true"><rect x=".5" y=".5" width="12" height="12" fill="#fff" stroke="#222" /><path d="M1 1l11 11M12 1L1 12" stroke="#8a2020" strokeWidth="1.300" /></svg>
        </button>
        {palette.map((c, i) => <button key={i} type="button" aria-label={"#" + c} className="h-[13px] min-w-0 flex-1" style={{ backgroundColor: "#" + c }} />)}
        <span className="flex h-[13px] w-[10px] items-start justify-center pt-px"><svg width="4" height="6" viewBox="0 0 4 6" aria-hidden="true"><path d="M4 0v6L0 3z" fill="#000" /></svg></span>
      </div>
      <div className="flex h-[13px] items-center pl-[3px] pr-[10px]">
        <Chev dir="left" pale />
        <span className="ml-[3px] h-[13px] w-[22%] bg-[#cdcdcd]" />
        <span className="flex-1" />
        <Chev dir="right" />
      </div>
    </div>
  );
}

/* ---------- status ---------- */

function Status() {
  return (
    <div className="flex h-[26px] shrink-0 items-center overflow-hidden bg-[#f0f0f0] pl-[2px] text-[#1a1a1a]">
      <dl className="grid w-28 grid-cols-[63px_1fr] leading-[13px]">
        <dt>Fill:</dt><dd>N/A</dd>
        <dt>Stroke:</dt><dd>N/A</dd>
      </dl>
      <label className="flex items-center gap-[2px] text-[#555]">O:
        <input defaultValue="0" className="h-5 w-8 border border-[#b8b8c0] bg-[#f0f0f0] px-[3px] text-[#888] outline-none" />
      </label>
      <span className="w-px" /><Arrows tall />
      <span className="ml-[3px] h-6 w-px bg-[#999]" />
      <button type="button" aria-label="Toggle visibility" className="ml-[6px] flex"><Ico s={9}><path d="M1 11c4-8 16-8 20 0-4 8-16 8-20 0z" fill="#999" stroke="#666" strokeWidth="2" /><circle cx="11" cy="11" r="4" fill="#444" /></Ico></button>
      <button type="button" aria-label="Toggle lock" className="ml-[9px] mr-[3px] flex"><Lock s={9} /></button>
      <select aria-label="Layer" className="h-6 w-[46px] appearance-none border border-[#b8b8c0] bg-white px-[2px] text-[9px] font-bold outline-none"><option>•Layer 1</option></select>
      <span className="flex h-6 w-4 items-center justify-center border border-l-0 border-[#b8b8c0]"><Chev dir="down" /></span>
      <p className="ml-px whitespace-nowrap"><b>Alt:</b> click to select under; scroll mouse-wheel to cycle-select; drag to move selected or select by touch</p>
      <dl className="ml-auto grid grid-cols-[22px_auto] border-l border-[#999] pl-[3px] leading-[13px]">
        <dt>X:</dt><dd className="text-right font-['Liberation_Mono',monospace]">7.40</dd>
        <dt>Y:</dt><dd className="text-right font-['Liberation_Mono',monospace]">14.83</dd>
      </dl>
      <label className="ml-2 mr-px flex items-center gap-[3px]">Z:
        <input defaultValue="149%" className="h-[18px] w-10 border border-[#c4c4cc] bg-white px-[6px] outline-none" />
      </label>
      <Arrows dark />
    </div>
  );
}

/* ---------- taskbar ---------- */

const office = (bg: string, d1: string, d2: string, l: string, round = false) => (
  <>
    {round ? <><circle cx="13" cy="11" r="9" fill={d1} /><path d="M13 2a9 9 0 019 9h-9z" fill={d2} /></> : <><path d="M7 1h15v20H7z" fill={d1} /><path d="M7 1h15v5H7z" fill={d2} /><path d="M7 16h15v5H7z" fill={bg} /></>}
    <path d="M1 6h10v10H1z" fill={bg} />
    <text x="6" y="14" fontSize="8.500" fontWeight="bold" fill="#fff" textAnchor="middle">{l}</text>
  </>
);

type App0 = { n: string; g: React.ReactNode; on?: "open" | "active" };
const apps: App0[] = [
  { n: "Internet Explorer", g: <><path d="M18 14.500A7 7 0 1118.300 11.500H5.500" stroke="#45b8f0" strokeWidth="4" /><path d="M3 20C-2 17 9 3 18 1.500c3.500-.5 3 3 1.500 5" stroke="#f6c93a" strokeWidth="1.700" /></> },
  { n: "File Explorer", on: "open", g: <><path d="M1 4l5-2 14 1v15H1z" fill="#e6c65c" /><path d="M3 3h4M9 4h4" stroke="#3a8a3a" strokeWidth="2" /><path d="M12 4h5" stroke="#c44" strokeWidth="2" /><path d="M1 6h20v12H1z" fill="#f6e49a" /><path d="M4 21v-8h14v8h-4v-4H8v4z" fill="#7cb6e4" stroke="#4a8cc4" strokeWidth=".7" /></> },
  { n: "Store", g: <><path d="M1 1h20v20H1z" fill="#0f8a24" /><path d="M4 8h14l-1 10H5z" fill="#fff" /><path d="M7 8c0-6 8-6 8 0" stroke="#fff" strokeWidth="1.300" /><path d="M8 10h2.500v2.500H8zM11.500 10H14v2.500h-2.500zM8 13.500h2.500V16H8zM11.500 13.500H14V16h-2.500z" fill="#0f8a24" /></> },
  { n: "Firefox", g: <><circle cx="11" cy="11" r="10" fill="#e4701c" /><circle cx="10" cy="9" r="7" fill="#2b66b4" /><path d="M2 5c0 4 3 3 4 6s4 5 8 3c-2 4-8 5-10 2S0 9 2 5z" fill="#f49a28" /><path d="M17 3c5 5 5 14-3 17 4-4 4-9 2-13z" fill="#fbd33a" /><path d="M6 7c2-3 6-3 7-1l-4 3z" fill="#7ab4e8" /></> },
  { n: "MATLAB", g: <><path d="M0 13l7-4 4 3-5 4z" fill="#3f74b4" /><path d="M7 9c3-2 5-8 7-8L9 14z" fill="#6a3020" /><path d="M14 1c2 1 5 12 8 18-4-4-6-4-8-2s-3 4-5 4l-2-4c4-2 5-14 7-16z" fill="#d85a24" /><path d="M14 1c0 6 0 10-4 16l4-3z" fill="#f49a3c" /></> },
  { n: "Excel", g: office("#127a44", "#21a366", "#33c481", "X") },
  { n: "Chrome", on: "open", g: <><circle cx="11" cy="11" r="10" fill="#fff" /><path d="M11 11L2.300 6A10 10 0 0119.700 6z" fill="#dc4437" /><path d="M11 11V6h8.700A10 10 0 0111 21l5-8z" fill="#fbcb3c" /><path d="M11 11l5 2-5 8A10 10 0 012.300 6z" fill="#1e9e58" /><circle cx="11" cy="11" r="5" fill="#fff" /><circle cx="11" cy="11" r="3.900" fill="#4a86ee" /></> },
  { n: "OneNote", g: <><path d="M10 3h11v16H10z" fill="#fff" stroke="#80397b" /><path d="M14 6h6M14 9h6M14 12h6M14 15h6" stroke="#80397b" /><path d="M1 3l12-2v20L1 19z" fill="#80397b" /><text x="7" y="14.500" fontSize="10" fontWeight="bold" fill="#fff" textAnchor="middle">N</text></> },
  { n: "PowerPoint", g: office("#c43e1c", "#d9583a", "#ff8f6b", "P", true) },
  { n: "Word", g: office("#185abd", "#2b7cd3", "#41a5ee", "W") },
  { n: "Media Player", g: <><path d="M4 3h15v16H4z" fill="#8fc4de" stroke="#4a86a8" /><path d="M2 4h14v15H2z" fill="#c4e2ee" stroke="#6aa0bc" /><circle cx="9" cy="11" r="6" fill="#f07c1c" stroke="#fff" strokeWidth=".8" /><path d="M7.500 8v6.500l5-3.200z" fill="#fff" /></> },
  { n: "WinRAR", on: "open", g: <><path d="M1 1h20v6H1z" fill="#c4244c" /><path d="M1 8h20v6H1z" fill="#5a4ab4" /><path d="M1 15h20v6H1z" fill="#28924a" /><path d="M3 3h16M3 10h16M3 17h16" stroke="#fff" strokeOpacity=".35" /><path d="M8 0h6v22H8z" fill="#c4682a" /><path d="M7 8h8v6H7z" fill="#f2eadc" stroke="#665" /><path d="M9 10v3M11 10v3M13 10v3" stroke="#443" /><path d="M8 2h6v4H8z" fill="#f4b832" /></> },
  { n: "Acrobat", on: "open", g: <><path d="M1.500 1.500h19v19h-19z" fill="#d41408" /><path d="M1.500 13h19v7.500h-19z" fill="#9c0e08" /><path d="M4 17c5-3 8-8 7-12-2 3 2 8 8 8-5-1-11 1-15 4z" stroke="#fff" strokeWidth="1.100" /></> },
  { n: "Inkscape", on: "active", g: null },
  { n: "SolidWorks", on: "open", g: <><path d="M1 5l10-4 10 4-9 4z" fill="#f04a44" /><path d="M1 5l11 4v12L1 16z" fill="#c4161c" /><path d="M12 9l9-4v11l-9 5z" fill="#84080c" /><text x="6" y="14" fontSize="9" fontWeight="bold" fill="#fff" textAnchor="middle">S</text><text x="16.500" y="14" fontSize="8" fontWeight="bold" fill="#fff" textAnchor="middle">W</text><text x="13.500" y="21.500" fontSize="7" fontWeight="bold" fill="#fff" stroke="#222" strokeWidth="1.500" paintOrder="stroke" textAnchor="middle">2016</text></> },
];

function Taskbar() {
  return (
    <footer className="flex h-9 shrink-0 items-center bg-[linear-gradient(90deg,#b5802f_0%,#b8822f_6%,#8f6c46_6.400%,#bd883a_7.200%,#c08b36_12%,#94714a_13%,#bf8a3a_14%,#bf8935_21.500%,#987048_22%,#c28d38_23%,#c08c33_30.500%,#98744c_31.200%,#c59138_32%,#c08830_41%,#956f45_41.800%,#c28c36_43%,#c58d32_52%,#94704a_53%,#c18b35_54.500%,#c28a34_67%,#98714a_67.500%,#c58c38_72%,#bf9a36_82%,#c09034_85%,#876650_85.500%,#8f6c4a_86.500%,#c5862e_88%,#bf7a2a_100%)]">
      <button type="button" aria-label="Start" className="flex w-11 justify-center">
        <Ico s={24}><path d="M0 3l9.500-1.500V10.500H0zM11 1.300L22 0v10.500H11zM0 11.700h9.500V20.500L0 19zM11 11.700h11V22l-11-1.500z" fill="#fff" /></Ico>
      </button>
      <div className="flex gap-[3px]">
        {apps.map((a) => (
          <button key={a.n} type="button" aria-label={a.n} className={a.on === "active" ? "flex h-[35px] w-[53px] items-center justify-center border border-[#f4e6c8] bg-[#d9bd88]" : a.on ? "flex h-[35px] w-[53px] items-center justify-center border border-[#e0bf86] bg-[#cfa662]" : "flex h-[35px] w-[53px] items-center justify-center"}>
            {a.on === "active" ? <InkMark s={30} /> : <Ico s={29}>{a.g}</Ico>}
          </button>
        ))}
      </div>
      <div className="ml-auto flex items-center gap-2 pr-4">
        <button type="button" aria-label="Show hidden icons" className="flex"><svg width="8" height="5" viewBox="0 0 8 5" aria-hidden="true"><path d="M0 5l4-5 4 5z" fill="#fff" /></svg></button>
        <Ico s={15}><path d="M3 1v21" stroke="#fff" strokeWidth="2" /><path d="M4 2h9v2h6v9h-8v-2H4z" fill="#fff" /><circle cx="15" cy="15" r="6" fill="#d83a30" /><path d="M12.500 12.500l5 5M17.500 12.500l-5 5" stroke="#fff" strokeWidth="2" /></Ico>
        <Ico s={14}><path d="M1 18h3v3H1zM5.500 15h3v6h-3zM10 11h3v10h-3zM14.500 7h3v14h-3zM19 3h3v18h-3z" fill="#fff" /></Ico>
        <Ico s={14}><path d="M3 1v5M8 1v5" stroke="#fff" strokeWidth="2" /><path d="M1 6h9v5H7v10H4V11H1z" fill="#fff" /><path d="M12.500 3.500h7v17h-7z" stroke="#fff" strokeWidth="2" /><path d="M14.500 1h3v2h-3z" fill="#fff" /></Ico>
        <Ico s={15}><path d="M1 7h4l6-6v18l-6-5H1z" fill="#fff" /><circle cx="15" cy="15" r="5.500" fill="#fff" stroke="#d83a30" strokeWidth="2.500" /><path d="M11 11l8 8" stroke="#d83a30" strokeWidth="2.500" /></Ico>
        <time className="ml-[6px] text-center leading-4 text-white"><span className="block">2:03 PM</span><span className="block">2/18/2020</span></time>
      </div>
    </footer>
  );
}

export default function App() {
  return (
    <div className="flex h-screen flex-col overflow-hidden bg-white pt-[6px] font-['Open_Sans',sans-serif] text-[10px]">
      <div className="ml-[3px] mr-[2px] flex min-h-0 flex-1 flex-col">
        <Top />
        <div className="flex min-h-0 flex-1">
          <Toolbox />
          <Canvas />
          <div className="w-[5px] bg-[#f0f0f0]" />
          <Dock />
          <div className="flex w-[14px] shrink-0 flex-col items-center bg-[#f0f0f0] pt-1 pb-[2px]">
            <Chev dir="up" />
            <span className="mt-[9px] w-[13px] basis-[73%] bg-[#cdcdcd]" />
            <span className="flex-1" />
            <Chev dir="down" />
          </div>
          <aside className="flex shrink-0 bg-[#f5f6f8]">
            <Column items={cmds} size={16} more />
            <Column items={snaps} size={17} />
          </aside>
        </div>
        <PaletteBar />
        <Status />
        <Taskbar />
      </div>
      <p className="h-2 shrink-0 overflow-hidden pt-px text-center font-['Liberation_Sans',sans-serif] text-[20px] font-bold leading-5 text-[#6b7480]">setting in epiloger</p>
    </div>
  );
}
